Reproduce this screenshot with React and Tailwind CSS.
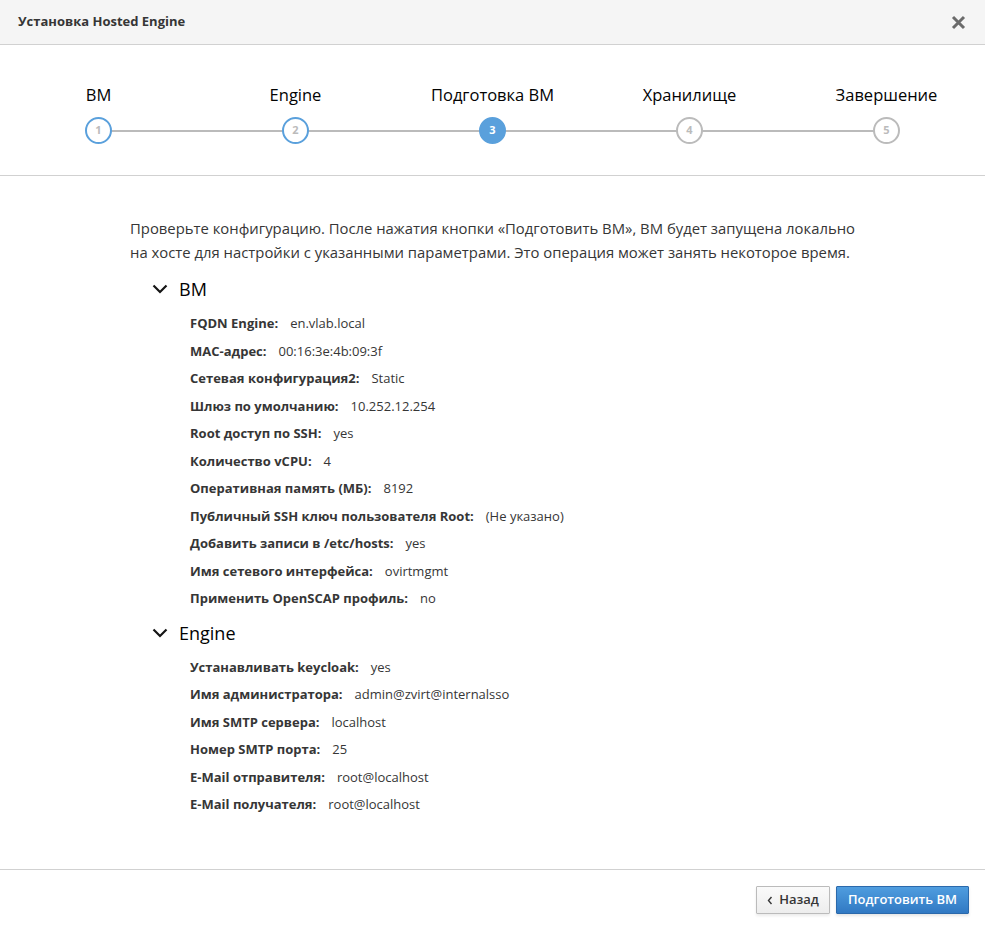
const steps = ["ВМ", "Engine", "Подготовка ВМ", "Хранилище", "Завершение"];
const current = 3;

const vmRows = [
  ["FQDN Engine:", "en.vlab.local"],
  ["MAC-адрес:", "00:16:3e:4b:09:3f"],
  ["Сетевая конфигурация2:", "Static"],
  ["Шлюз по умолчанию:", "10.252.12.254"],
  ["Root доступ по SSH:", "yes"],
  ["Количество vCPU:", "4"],
  ["Оперативная память (МБ):", "8192"],
  ["Публичный SSH ключ пользователя Root:", "(Не указано)"],
  ["Добавить записи в /etc/hosts:", "yes"],
  ["Имя сетевого интерфейса:", "ovirtmgmt"],
  ["Применить OpenSCAP профиль:", "no"],
];

const engineRows = [
  ["Устанавливать keycloak:", "yes"],
  ["Имя администратора:", "admin@zvirt@internalsso"],
  ["Имя SMTP сервера:", "localhost"],
  ["Номер SMTP порта:", "25"],
  ["E-Mail отправителя:", "root@localhost"],
  ["E-Mail получателя:", "root@localhost"],
];

function Chevron() {
  return (
    <svg width="16" height="10" viewBox="0 0 16 10" className="mr-[11px]">
      <polyline points="1.5,1.5 8,8 14.5,1.5" fill="none" stroke="#151515" strokeWidth="2.2" />
    </svg>
  );
}

function Section({ title, rows }) {
  return (
    <div className="mt-2">
      <div className="flex items-center pl-[22px] text-[18px] leading-[24px] text-[#030303] mb-[9px]">
        <Chevron />
        <span>{title}</span>
      </div>
      <div className="pl-[60px]">
        {rows.map(([label, value]) => (
          <div key={label} className="text-[13px] leading-[27.5px] text-[#363636] whitespace-nowrap">
            <span className="font-bold">{label}</span>
            <span className="ml-[12px]">{value}</span>
          </div>
        ))}
      </div>
    </div>
  );
}

function StepCircle({ n }) {
  let cls = "border-2 border-[#bbbbbb] bg-white text-[#bbbbbb]";
  if (n < current) cls = "border-2 border-[#5aa0dc] bg-white text-[#bbbbbb]";
  if (n === current) cls = "border-2 border-[#5aa0dc] bg-[#5aa0dc] text-white";
  return (
    <div
      className={`relative z-10 w-[27px] h-[27px] rounded-full flex items-center justify-center text-[11px] font-bold ${cls}`}
    >
      {n}
    </div>
  );
}

export default function App() {
  return (
    <div className="h-[930px] w-[985px] flex flex-col bg-white font-['Open_Sans',sans-serif]">
      <div className="h-[45px] shrink-0 bg-[#f5f5f5] border-b border-[#d1d1d1] flex items-center justify-between pl-[18px] pr-[19px]">
        <h4 className="text-[13px] font-bold text-[#363636]">Установка Hosted Engine</h4>
        <svg width="15" height="15" viewBox="0 0 15 15">
          <path d="M2 2 L13 13 M13 2 L2 13" stroke="#6b6b6b" strokeWidth="3" />
        </svg>
      </div>

      <div className="shrink-0 border-b border-[#d1d1d1] pt-[39px] pb-[31px]">
        <div className="grid grid-cols-5">
          {steps.map((s) => (
            <div key={s} className="text-center text-[16.5px] leading-[22px] text-[#030303]">
              {s}
            </div>
          ))}
        </div>
        <div className="relative grid grid-cols-5 mt-[11px]">
          <div className="absolute left-[10%] right-[10%] top-[12.5px] h-[2px] bg-[#bbbbbb]" />
          {steps.map((s, i) => (
            <div key={s} className="flex justify-center">
              <StepCircle n={i + 1} />
            </div>
          ))}
        </div>
      </div>

      <div className="flex-1 pt-[40px] pl-[130px]">
        <p className="w-[738px] text-[14.85px] leading-[24px] text-[#363636]">
          Проверьте конфигурацию. После нажатия кнопки «Подготовить ВМ», ВМ будет запущена локально на
          хосте для настройки с указанными параметрами. Это операция может занять некоторое время.
        </p>
        <div className="mt-[13px]">
          <Section title="ВМ" rows={vmRows} />
          <Section title="Engine" rows={engineRows} />
        </div>
      </div>

      <div className="h-[61px] shrink-0 border-t border-[#d1d1d1] flex items-center justify-end gap-[6px] pr-[16px]">
        <button className="h-[28px] px-[10px] flex items-center gap-[6px] text-[13px] font-semibold text-[#363636] border border-[#bbbbbb] bg-linear-to-b from-[#fafafa] to-[#ededed] rounded-[1px] shadow-[0_2px_3px_rgba(0,0,0,0.08)]">
          <svg width="6" height="9" viewBox="0 0 6 9">
            <polyline points="4.5,1 1.5,4.5 4.5,8" fill="none" stroke="#363636" strokeWidth="1.4" />
          </svg>
          Назад
        </button>
        <button className="h-[28px] px-[11px] text-[13px] font-semibold text-white border border-[#2b69ab] bg-linear-to-b from-[#4f9ddf] to-[#3179c3] rounded-[1px] shadow-[0_2px_3px_rgba(0,0,0,0.1)]">
          Подготовить ВМ
        </button>
      </div>
    </div>
  );
}
